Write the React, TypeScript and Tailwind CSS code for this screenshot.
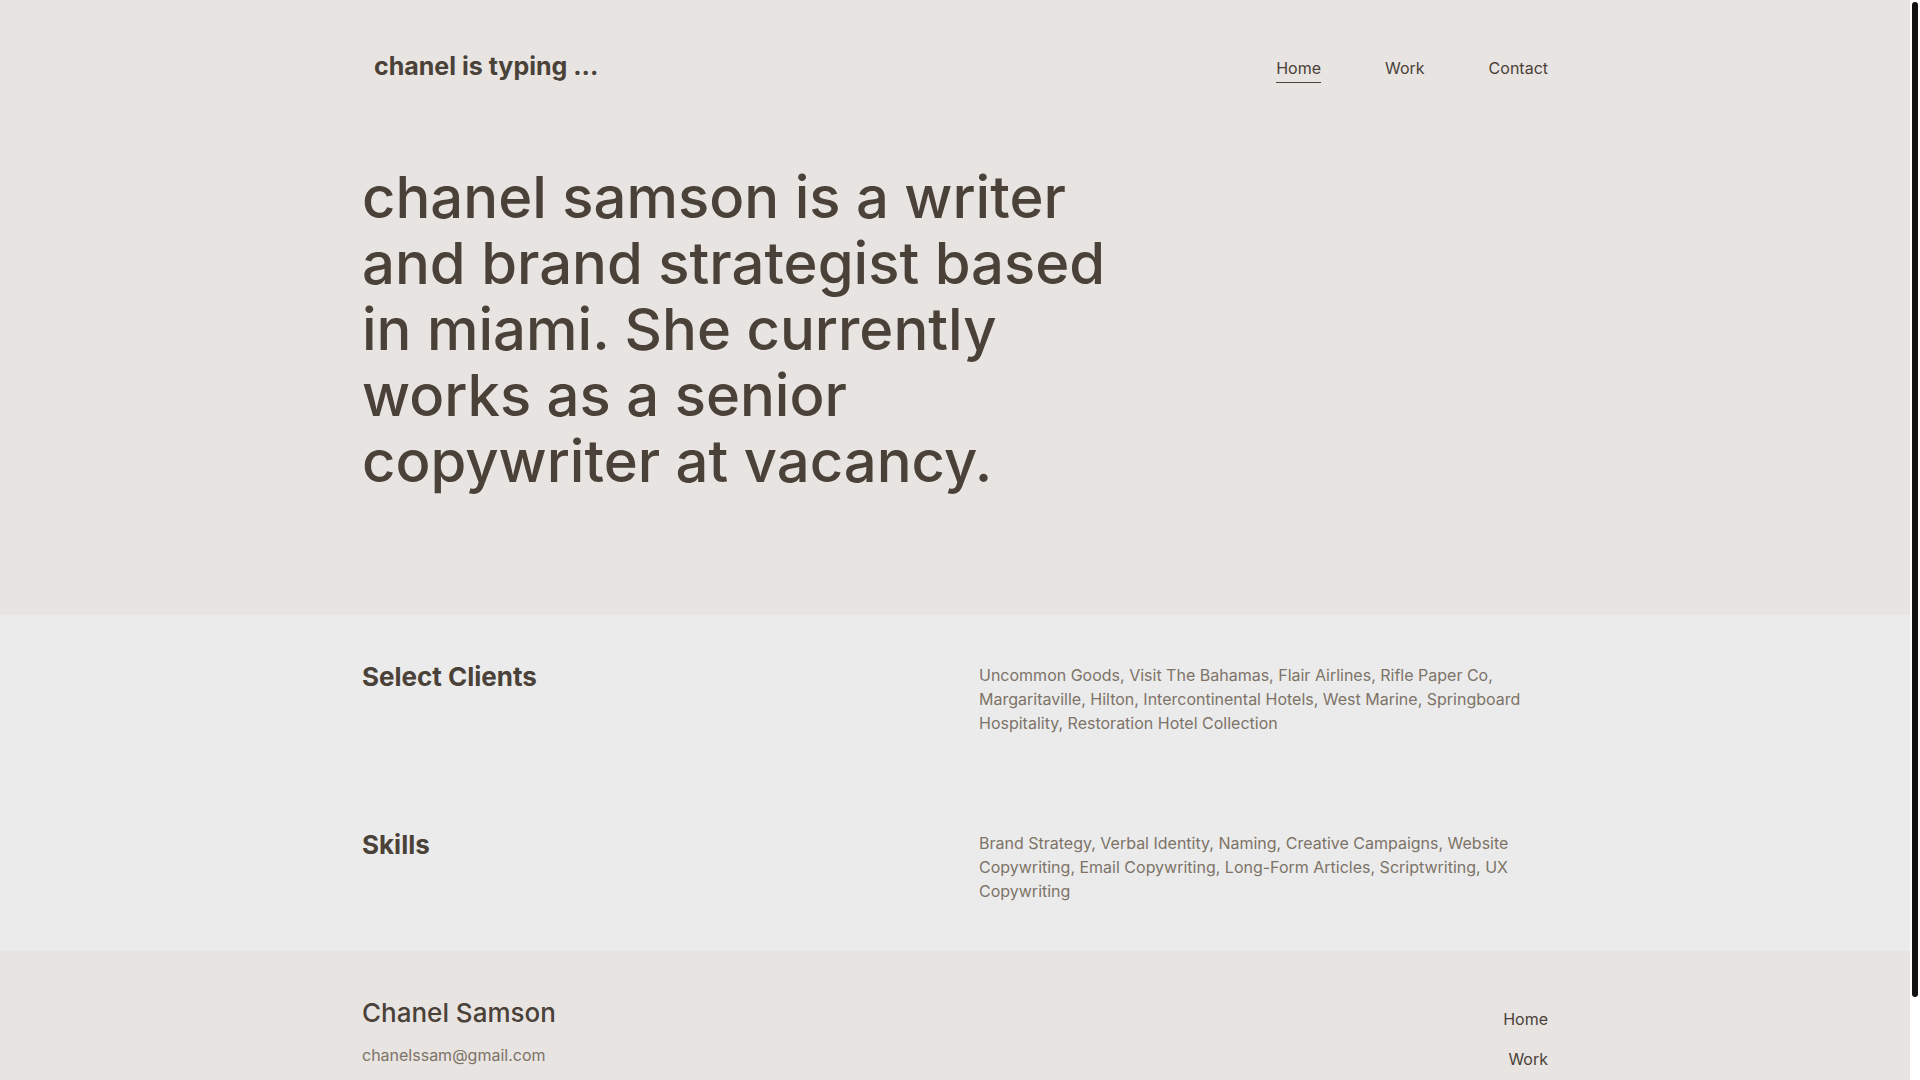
interface NavItem {
  label: string;
  active?: boolean;
}

interface InfoRowProps {
  title: string;
  text: string;
}

const navItems: NavItem[] = [
  { label: 'Home', active: true },
  { label: 'Work' },
  { label: 'Contact' },
];

const footerLinks = ['Home', 'Work'];

const rows: InfoRowProps[] = [
  {
    title: 'Select Clients',
    text: 'Uncommon Goods, Visit The Bahamas, Flair Airlines, Rifle Paper Co, Margaritaville, Hilton, Intercontinental Hotels, West Marine, Springboard Hospitality, Restoration Hotel Collection',
  },
  {
    title: 'Skills',
    text: 'Brand Strategy, Verbal Identity, Naming, Creative Campaigns, Website Copywriting, Email Copywriting, Long-Form Articles, Scriptwriting, UX Copywriting',
  },
];

function Header() {
  return (
    <header className="flex justify-between pt-12">
      <a href="#" className="pl-3 text-[25px] leading-9 font-bold">
        chanel is typing ...
      </a>
      <nav className="flex gap-16 pt-2">
        {navItems.map((item) => (
          <a
            key={item.label}
            href="#"
            className={
              item.active
                ? 'h-[27px] border-b border-[#4a4138] leading-6'
                : 'h-[27px] leading-6'
            }
          >
            {item.label}
          </a>
        ))}
      </nav>
    </header>
  );
}

function InfoRow({ title, text }: InfoRowProps) {
  return (
    <div className="grid grid-cols-2 gap-12 py-12">
      <h2 className="text-[26px] leading-7 font-bold">{title}</h2>
      <p className="text-[#7d7368]">{text}</p>
    </div>
  );
}

export default function App() {
  return (
    <div className="flex h-screen overflow-hidden bg-white font-['Inter',sans-serif] text-base text-[#4a4138]">
      <div className="min-w-0 flex-1 overflow-hidden bg-[#e8e4e1]">
        <div className="mx-auto max-w-[1186px]">
          <Header />
          <h1 className="max-w-[790px] pt-20 pb-[121px] text-[58px] leading-[66px] font-medium">
            chanel samson is a writer and brand strategist based in miami. She currently works as a
            senior copywriter at vacancy.
          </h1>
        </div>

        <section className="bg-[#ebebeb]">
          <div className="mx-auto max-w-[1186px]">
            {rows.map((row) => (
              <InfoRow key={row.title} title={row.title} text={row.text} />
            ))}
          </div>
        </section>

        <footer className="mx-auto flex max-w-[1186px] justify-between pt-12">
          <div>
            <h2 className="text-[26px] leading-7 font-medium">Chanel Samson</h2>
            <p className="pt-4 text-[#7d7368]">chanelssam@gmail.com</p>
          </div>
          <nav className="flex flex-col items-end gap-4 pt-2">
            {footerLinks.map((label) => (
              <a key={label} href="#">
                {label}
              </a>
            ))}
          </nav>
        </footer>
      </div>

      {/* Scroll track */}
      <div className="w-[10px] shrink-0 p-[2px]">
        <div className="h-[92.5%] rounded-full bg-[#111111]" />
      </div>
    </div>
  );
}
